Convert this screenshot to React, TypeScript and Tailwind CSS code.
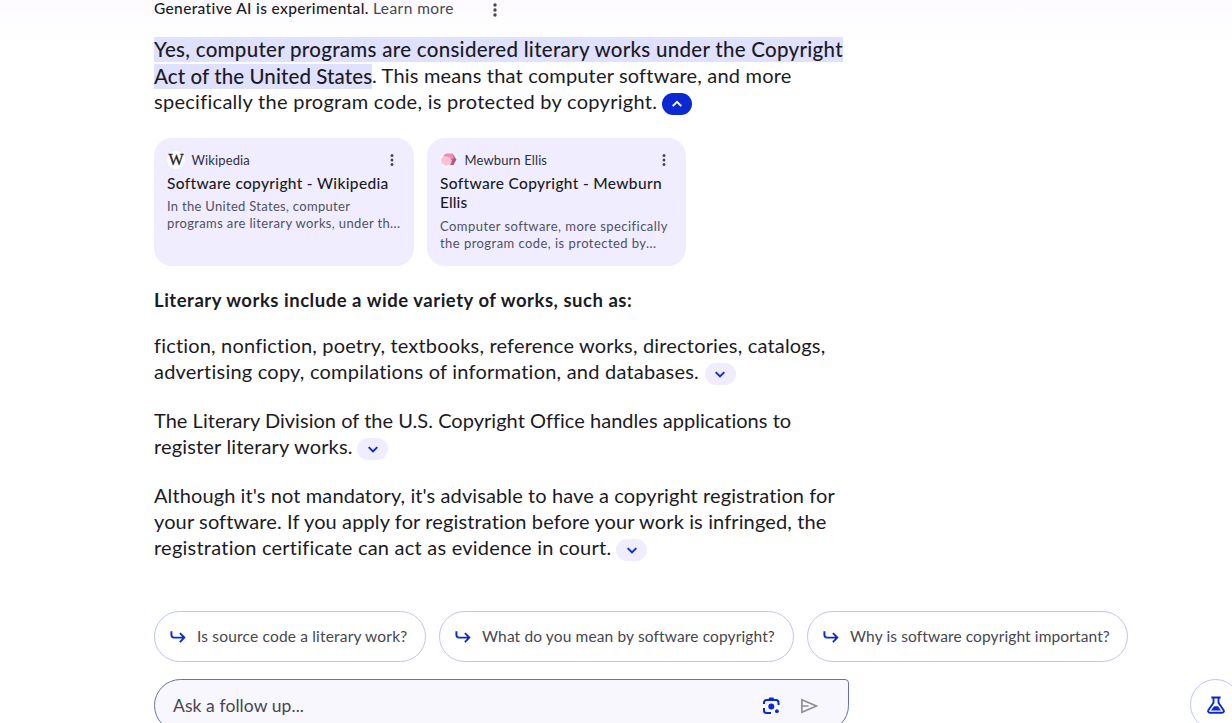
import type { ReactNode } from "react";

function Dots({ className = "" }: { className?: string }) {
  return (
    <svg width="4" height="14" viewBox="0 0 4 14" fill="#46464f" className={className}>
      <circle cx="2" cy="2" r="1.7" />
      <circle cx="2" cy="7" r="1.7" />
      <circle cx="2" cy="12" r="1.7" />
    </svg>
  );
}

function Toggle({ open = false, className = "" }: { open?: boolean; className?: string }) {
  return (
    <button
      className={`flex h-[22px] shrink-0 items-center justify-center rounded-full ${
        open ? "w-[30px] bg-[#0b28d3] text-white" : "w-[31px] bg-[#efedff] text-[#0b28d3]"
      } ${className}`}
    >
      <svg width="12" height="8" viewBox="0 0 12 8" fill="none" stroke="currentColor" strokeWidth="1.9">
        <path d={open ? "M1.7 6.2 6 1.9l4.3 4.3" : "M1.7 2.1 6 6.4l4.3-4.3"} />
      </svg>
    </button>
  );
}

function Line({ children, className = "" }: { children: ReactNode; className?: string }) {
  return <div className={`flex h-[26px] items-start text-[20px] leading-[24px] ${className}`}>{children}</div>;
}

function SourceCard(props: {
  icon: ReactNode;
  name: ReactNode;
  title: ReactNode;
  description: ReactNode;
  className?: string;
}) {
  return (
    <article className={`h-32 rounded-[18px] bg-[#efedff] px-[13px] pt-[14px] ${props.className ?? ""}`}>
      <div className="flex h-4 items-center">
        <span className="flex size-[18px] shrink-0 items-center justify-center">{props.icon}</span>
        <span className="ml-[6.5px] text-[13px] leading-4 text-[#30303b]">{props.name}</span>
        <Dots className="mr-[7px] ml-auto scale-90" />
      </div>
      <h3 className="mt-1.5 text-[15.5px] leading-[19px] font-medium text-[#1b1b24]">{props.title}</h3>
      <p className="mt-[5px] text-[13px] leading-[17px] text-[#51515e]">{props.description}</p>
    </article>
  );
}

function Chip({ children, className = "" }: { children: ReactNode; className?: string }) {
  return (
    <button
      className={`flex h-[51px] items-center rounded-full border border-[#bec2ff] bg-white pl-[15px] text-[15.5px] text-[#46464f] ${className}`}
    >
      <svg width="16" height="14" viewBox="0 0 16 14" fill="none" stroke="#0b28d3" strokeWidth="1.9">
        <path d="M1.4 1.2v3.6a2.8 2.8 0 0 0 2.8 2.8h9.7M9.9 3.1l4.4 4.5-4.4 4.5" />
      </svg>
      {children}
    </button>
  );
}

function LensIcon() {
  return (
    <svg width="19" height="18" viewBox="0 0 19 18" fill="none" stroke="#0b28d3" strokeWidth="2">
      <path d="M2 7V5.5A2.5 2.5 0 0 1 4.5 3h9.5A2.5 2.5 0 0 1 16.5 5.5V8M2 11v2.5A2.5 2.5 0 0 0 4.5 16H9" />
      <path d="M6.2 2.7 7.3.6h4l1.1 2.1z" fill="#0b28d3" stroke="none" />
      <circle cx="9.3" cy="9.5" r="3" fill="#0b28d3" stroke="none" />
      <circle cx="14.9" cy="14.2" r="1.9" fill="#0b28d3" stroke="none" />
    </svg>
  );
}

export default function App() {
  return (
    <div className="relative h-[723px] w-full overflow-hidden bg-white bg-linear-to-b from-[#fcfaff] to-white to-[45px] font-['Lato',sans-serif] text-[#1b1b24]">
      <main className="flex flex-col pl-[154px] whitespace-nowrap">
        <div className="flex h-[37px] items-start text-[15.5px] leading-4">
          <span className="w-[219px] font-medium tracking-[0.35px]">Generative AI is experimental.</span>
          <a className="w-[120px] tracking-[0.44px] text-[#46464f]">Learn more</a>
          <Dots className="mt-[3px]" />
        </div>

        <div className="flex flex-col">
          <div className="flex h-[27px] text-[20.5px] leading-[25px] font-medium">
            <mark className="h-[25px] bg-[#e0e0ff] tracking-[0.29px] text-inherit">
              Yes, computer programs are considered literary works under the Copyright
            </mark>
          </div>
          <div className="flex h-[25px] text-[20px] leading-[23px]">
            <mark className="h-[25px] w-[218px] bg-[#e0e0ff] text-[20.5px] leading-6 font-medium tracking-[0.09px] text-inherit">
              Act of the United States
            </mark>
            <span className="tracking-[0.18px]">. This means that computer software, and more</span>
          </div>
          <Line>
            <span className="w-[508px] tracking-[0.28px]">specifically the program code, is protected by copyright.</span>
            <Toggle open className="mt-1" />
          </Line>
        </div>

        <div className="mt-[23px] flex gap-[13px]">
          <SourceCard
            className="w-[260px]"
            icon={
              <span className="flex size-[18px] items-center justify-center rounded-full bg-white font-['Liberation_Serif',serif] text-[16px] leading-none text-[#222] [-webkit-text-stroke:0.3px_#222]">
                W
              </span>
            }
            name={<span className="tracking-[0.13px]">Wikipedia</span>}
            title={<span className="tracking-[0.32px]">Software copyright - Wikipedia</span>}
            description={
              <>
                <span className="tracking-[0.3px]">In the United States, computer</span>
                <br />
                <span className="tracking-[0.36px]">programs are literary works, under th...</span>
              </>
            }
          />
          <SourceCard
            className="w-[259px]"
            icon={
              <svg width="18" height="18" viewBox="0 0 18 18">
                <circle cx="9" cy="9" r="8.8" fill="#f8f4ff" />
                <path d="M4 4 6.5 2.7 12.5 2.8 16.5 8.5 13.5 14 10 14 5 8z" fill="#b9587f" />
                <path d="M3 5 6.500 2.700 12.500 2.800 14 7.500 11 8 8 6z" fill="#f08cb5" />
                <path d="m1 8 2.500-3 6 1 2.500 3.500-1.500 4-5.500 1.200L1.500 12z" fill="#ffc2d3" />
              </svg>
            }
            name={<span className="tracking-[0.12px]">Mewburn Ellis</span>}
            title={
              <>
                <span className="tracking-[0.33px]">Software Copyright - Mewburn</span>
                <br />
                <span className="tracking-[0.1px]">Ellis</span>
              </>
            }
            description={
              <span className="block pt-px tracking-[0.45px]">
                Computer software, more specifically
                <br />
                the program code, is protected by...
              </span>
            }
          />
        </div>

        <h2 className="mt-5 h-[26px] text-[18.5px] leading-[28px] font-bold tracking-[0.52px]">
          Literary works include a wide variety of works, such as:
        </h2>

        <div className="mt-[21px]">
          <Line className="tracking-[0.18px]">
            fiction, nonfiction, poetry, textbooks, reference works, directories, catalogs,
          </Line>
          <Line>
            <span className="w-[550.5px] tracking-[0.22px]">
              advertising copy, compilations of information, and databases.
            </span>
            <Toggle className="mt-1" />
          </Line>
        </div>

        <div className="mt-[23px]">
          <Line className="tracking-[0.03px]">
            The Literary Division of the U.S. Copyright Office handles applications to
          </Line>
          <Line>
            <span className="w-[203px] tracking-[0.16px]">register literary works.</span>
            <Toggle className="mt-1" />
          </Line>
        </div>

        <div className="mt-[23px]">
          <Line className="tracking-[0.1px]">
            Although it's not mandatory, it's advisable to have a copyright registration for
          </Line>
          <Line className="tracking-[0.12px]">
            your software. If you apply for registration before your work is infringed, the
          </Line>
          <Line>
            <span className="w-[462px] tracking-[0.23px]">registration certificate can act as evidence in court.</span>
            <Toggle className="mt-1" />
          </Line>
        </div>

        <div className="mt-[50px] flex gap-[13px]">
          <Chip className="w-[272px]">
            <span className="ml-[11px] tracking-[0.18px]">Is source code a literary work?</span>
          </Chip>
          <Chip className="w-[355px]">
            <span className="ml-[11px] tracking-[0.13px]">What do you mean by software copyright?</span>
          </Chip>
          <Chip className="w-[321px]">
            <span className="ml-[11px] tracking-[0.11px]">Why is software copyright important?</span>
          </Chip>
        </div>

        <div className="mt-[17px] flex h-[53px] w-[695px] items-center rounded-[27px] rounded-tr-[4px] border border-[#666eb8] bg-[#f8f7fd] pr-[30px] pl-[18px]">
          <span className="pt-px text-[17.5px] tracking-[0.08px] text-[#46464f]">Ask a follow up...</span>
          <span className="ml-auto">
            <LensIcon />
          </span>
          <svg width="18" height="16" viewBox="0 0 18 16" fill="none" stroke="#90909a" strokeWidth="1.7" className="ml-[19px]">
            <path d="M1.9 1.7v12.6L16.3 8zM2 8h6.5" />
          </svg>
        </div>
      </main>

      <button className="absolute top-[679px] left-[1190px] flex size-[51px] items-center justify-center rounded-full border border-[#bec2ff] bg-white">
        <svg width="18" height="18" viewBox="0 0 18 18" fill="none" stroke="#0b28d3" strokeWidth="1.9">
          <path d="M4.3 1.5h9.4M6.5 1.5v5.2L1.5 14c-.9 1.4-.1 2.8 1.4 2.8h12.2c1.5 0 2.3-1.4 1.4-2.8l-5-7.3V1.5" />
          <path d="m4 14.5 3-4.3h4l3 4.3z" fill="#0b28d3" stroke="none" />
        </svg>
      </button>
    </div>
  );
}
